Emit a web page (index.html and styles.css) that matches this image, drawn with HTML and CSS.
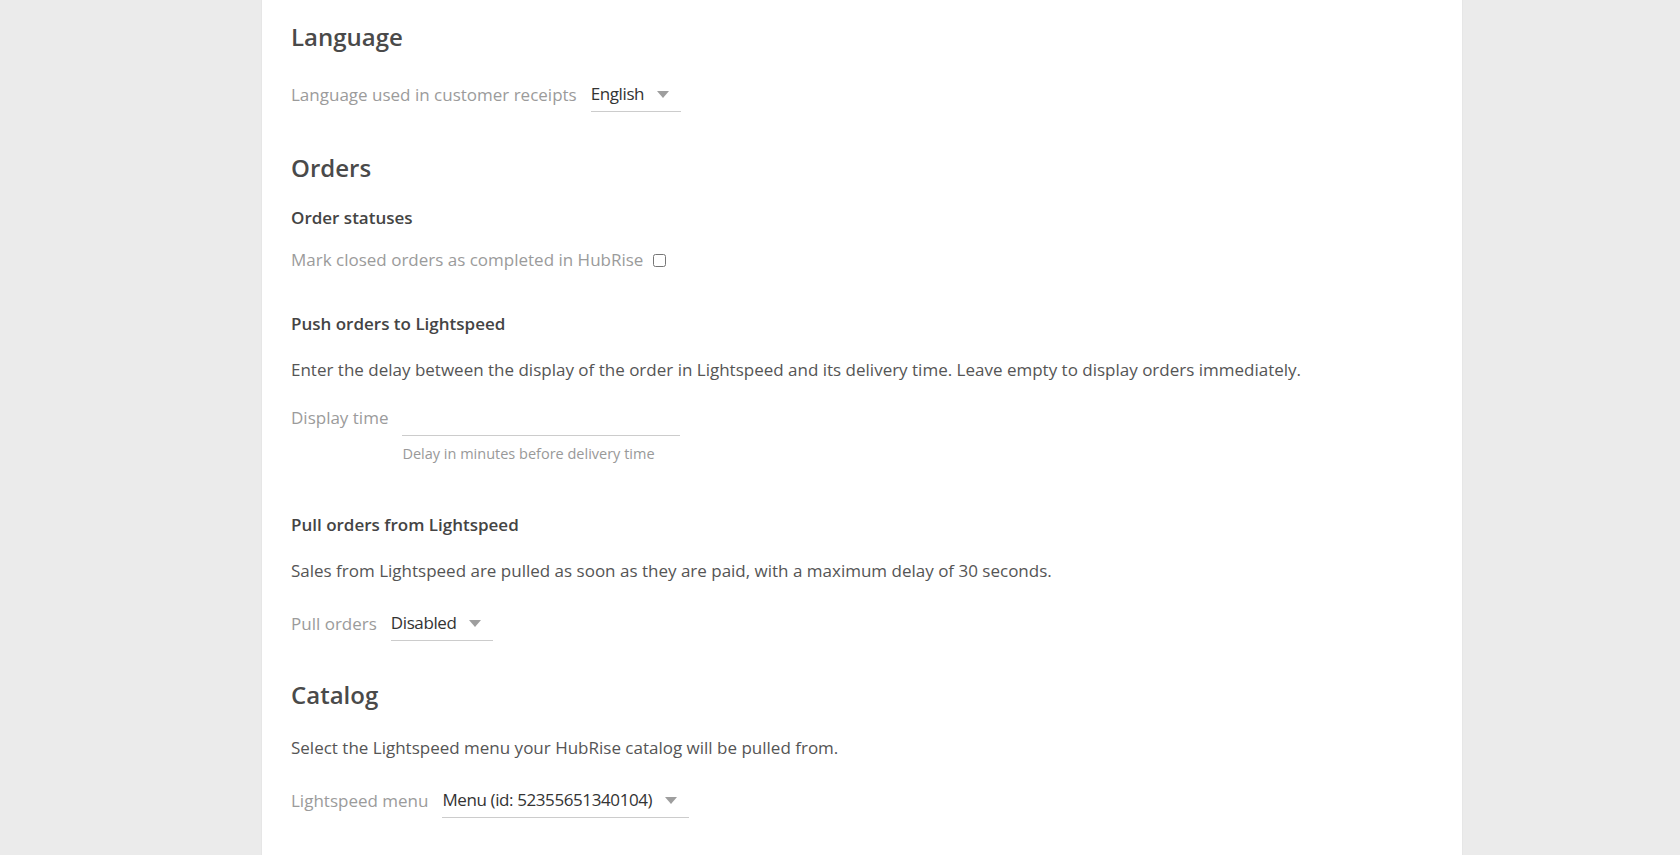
FILE: index.html
```html
<!DOCTYPE html>
<html lang="en">
<head>
<meta charset="utf-8">
<title>Lightspeed settings</title>
<link rel="stylesheet" href="styles.css">
</head>
<body>
<div class="page">
  <main class="card">
    <section class="section">
      <h2 class="section-title">Language</h2>
      <div class="field">
        <label class="field-label">Language used in customer receipts</label>
        <div class="select"><span class="select-value">English</span><svg class="caret" width="12" height="7" viewBox="0 0 12 7"><path d="M0 0h12L6 7z"/></svg></div>
      </div>
    </section>

    <section class="section section-orders">
      <h2 class="section-title section-title-tight">Orders</h2>

      <h3 class="sub-title">Order statuses</h3>
      <div class="field field-check">
        <label class="field-label">Mark closed orders as completed in HubRise</label>
        <input class="checkbox" type="checkbox">
      </div>

      <h3 class="sub-title sub-push">Push orders to Lightspeed</h3>
      <p class="text">Enter the delay between the display of the order in Lightspeed and its delivery time. Leave empty to display orders immediately.</p>
      <div class="field field-input">
        <label class="field-label">Display time</label>
        <div class="control">
          <div class="input"></div>
          <div class="help">Delay in minutes before delivery time</div>
        </div>
      </div>

      <h3 class="sub-title sub-pull">Pull orders from Lightspeed</h3>
      <p class="text">Sales from Lightspeed are pulled as soon as they are paid, with a maximum delay of 30 seconds.</p>
      <div class="field">
        <label class="field-label">Pull orders</label>
        <div class="select"><span class="select-value">Disabled</span><svg class="caret" width="12" height="7" viewBox="0 0 12 7"><path d="M0 0h12L6 7z"/></svg></div>
      </div>
    </section>

    <section class="section">
      <h2 class="section-title">Catalog</h2>
      <p class="text text-after-title">Select the Lightspeed menu your HubRise catalog will be pulled from.</p>
      <div class="field">
        <label class="field-label">Lightspeed menu</label>
        <div class="select"><span class="select-value">Menu (id: 52355651340104)</span><svg class="caret" width="12" height="7" viewBox="0 0 12 7"><path d="M0 0h12L6 7z"/></svg></div>
      </div>
    </section>
  </main>
</div>
</body>
</html>
```

FILE: styles.css
```css
html, body {
  margin: 0;
  height: 100%;
}
body {
  background: #ebebeb;
  font-family: "Open Sans", "Noto Sans", sans-serif;
  font-size: 17px;
  color: #555;
  overflow: hidden;
}
.page {
  padding-left: 44px;
  height: 100%;
}
.card {
  width: 1200px;
  margin: 0 auto;
  min-height: 100%;
  background: #fff;
  box-sizing: border-box;
  padding: 22px 29px 0;
  box-shadow: 0 0 1px rgba(0,0,0,0.12);
}
.section { margin-bottom: 41px; }
.section-orders { margin-bottom: 39px; }
.section-title {
  margin: 0 0 26px;
  font-size: 24px;
  line-height: 30px;
  font-weight: 600;
  color: #4a4a4a;
}
.section-title-tight { margin-bottom: 23px; }
.sub-title {
  margin: 0 0 18px;
  font-size: 17px;
  line-height: 24px;
  font-weight: 600;
  color: #444;
}
.sub-push { margin-top: 40px; }
.sub-pull { margin-top: 49px; }
.text {
  margin: 0 0 24px;
  padding-top: 4px;
  line-height: 24px;
}
.text-after-title { padding-top: 0; }
.field {
  display: flex;
  align-items: center;
  gap: 14px;
}
.field-label {
  color: #9b9b9b;
  line-height: 24px;
}
.select {
  display: flex;
  align-items: center;
  padding: 5px 12px 6px 0;
  line-height: 22px;
  border-bottom: 1px solid #ccc;
  color: #333;
}
.select-value {
  margin-right: 13px;
  letter-spacing: -0.4px;
}
.caret { fill: #9e9e9e; display: block; }
.checkbox {
  margin: 0;
  width: 13px;
  height: 13px;
}
.field-check { gap: 10px; }
.field-input { align-items: flex-start; }
.control { display: flex; flex-direction: column; }
.input {
  width: 278px;
  height: 29px;
  border-bottom: 1px solid #ccc;
}
.help {
  margin-top: 8px;
  font-size: 14.5px;
  line-height: 20px;
  color: #999;
}
```
